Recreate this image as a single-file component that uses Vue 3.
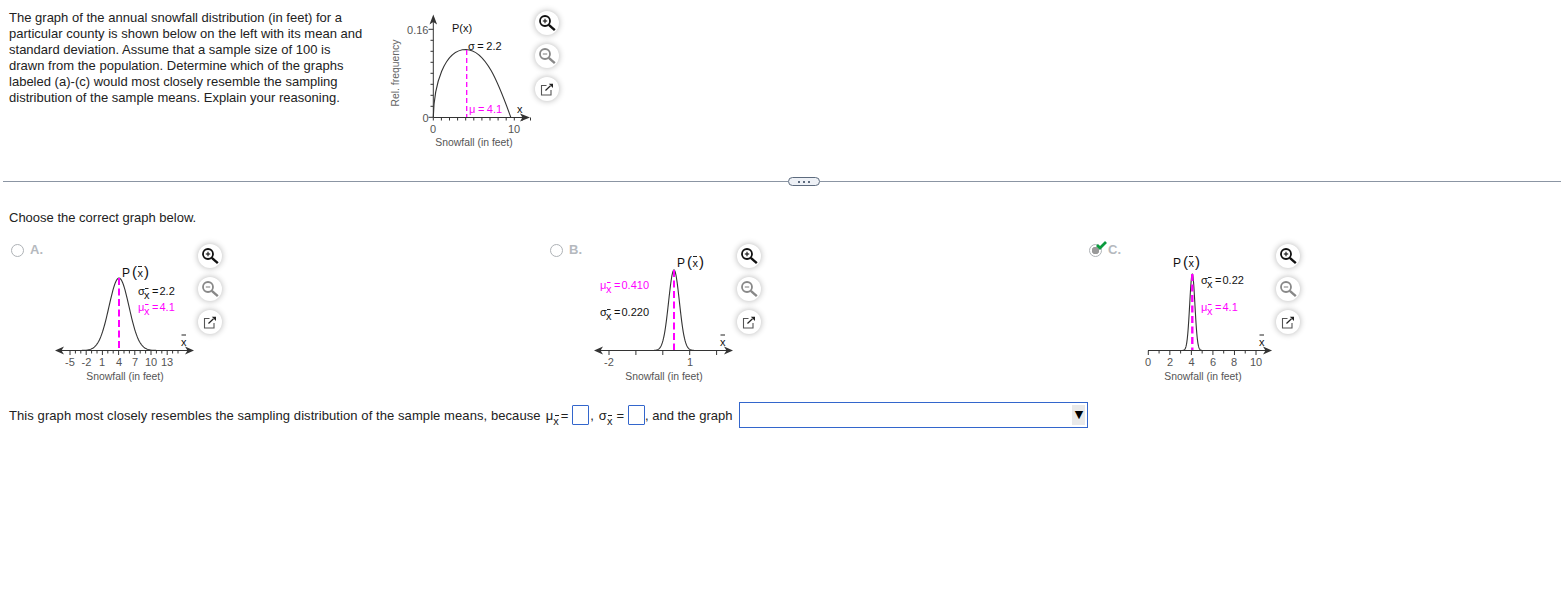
<script setup>
// axis and stat data for the three answer graphs, coords are local to each svg
const range = (a, b) => Array.from({ length: b - a + 1 }, (_, i) => a + i)

function bell(mean, sigma, top, base) {
  const pts = []
  for (let i = -60; i <= 60; i++) {
    const dx = (i / 60) * sigma * 4.5
    const y = base - (base - top) * Math.exp(-(dx * dx) / (2 * sigma * sigma))
    pts.push(`${(mean + dx).toFixed(2)} ${y.toFixed(2)}`)
  }
  return 'M' + pts.join('L')
}

const options = [
  {
    key: 'A',
    mean: 80, sigma: 10, top: 38, dash: '7 3.5', meanW: 2,
    leftArrow: true,
    ticks: range(-5, 15).map((u) => ({ x: 31 + (u + 5) * 5.4, major: (u + 5) % 3 === 0 })),
    labels: [['-5', 31], ['-2', 47.5], ['1', 63], ['4', 80], ['7', 96], ['10', 112], ['13', 128]],
    p: { x: 83, y: 37 },
    stats: [
      { sym: '\u03c3', val: '2.2', x: 99, y: 55, pink: false },
      { sym: '\u03bc', val: '4.1', x: 99, y: 71, pink: true }
    ]
  },
  {
    key: 'B',
    mean: 96, sigma: 5.4, top: 30, dash: '7 3.5', meanW: 2,
    leftArrow: true,
    ticks: range(0, 4).map((u) => ({ x: 31 + u * 26.9, major: true })),
    labels: [['-2', 31], ['1', 112]],
    p: { x: 99, y: 27 },
    stats: [
      { sym: '\u03bc', val: '0.410', x: 22, y: 49, pink: true },
      { sym: '\u03c3', val: '0.220', x: 22, y: 76, pink: false }
    ]
  },
  {
    key: 'C',
    mean: 75.3, sigma: 2.6, top: 34, dash: '7 3.5', meanW: 2.4,
    leftArrow: false,
    selected: true,
    ticks: range(0, 10).map((u) => ({ x: 31.3 + u * 10.77, major: u % 2 === 0 })),
    labels: [['0', 31], ['2', 53], ['4', 74.5], ['6', 96], ['8', 117], ['10', 139]],
    p: { x: 56, y: 27 },
    stats: [
      { sym: '\u03c3', val: '0.22', x: 84, y: 44, pink: false },
      { sym: '\u03bc', val: '4.1', x: 84, y: 71, pink: true }
    ]
  }
]

const curvePath = (o) => bell(o.mean, o.sigma, o.top, 110.5)

const topTicksX = range(0, 12).map((i) => 53.3 + i * 8.1)
const topTicksY = range(0, 8).map((i) => 29.3 + i * 11)
const tools = ['in', 'out', 'open']
</script>

<template>
  <div class="page">
    <section class="intro">
      <p class="question">
        The graph of the annual snowfall distribution (in feet) for a particular county is shown below on the left with its mean and standard deviation. Assume that a sample size of 100 is drawn from the population. Determine which of the graphs labeled (a)-(c) would most closely resemble the sampling distribution of the sample means. Explain your reasoning.
      </p>
      <svg class="source-graph" width="155" height="160" viewBox="0 0 155 160">
        <path class="curve" d="M53.3 117C54 85 64 49.5 86 49.5C107 50 120 88 130.7 117" />
        <line class="mean" x1="86.7" y1="50" x2="86.7" y2="117" stroke-dasharray="5 3" stroke-width="1.3" />
        <line class="axis" x1="53.3" y1="117.5" x2="146" y2="117.5" />
        <line class="axis" x1="53.3" y1="117.5" x2="53.3" y2="20" />
        <path class="head" d="M150 117.5l-10-4 2.5 4-2.5 4z" />
        <path class="head" d="M53.3 14.5l-3.8 10 3.8-2.5 3.8 2.5z" />
        <line v-for="x in topTicksX" :key="x" class="axis" :x1="x" y1="117.5" :x2="x" y2="120.5" />
        <line v-for="(y, i) in topTicksY" :key="y" class="axis" x1="53.3" :y1="y" :x2="i === 0 || i === 8 ? 48.5 : 50.5" :y2="y" />
        <text class="tick" x="48.5" y="33.5" text-anchor="end">0.16</text>
        <text class="tick" x="48.5" y="121.5" text-anchor="end">0</text>
        <text class="tick" x="53" y="133" text-anchor="middle">0</text>
        <text class="tick vert" transform="translate(19 73) rotate(-90)" text-anchor="middle">Rel. frequency</text>
        <text class="tick" x="134" y="133" text-anchor="middle">10</text>
        <text class="note" x="72" y="32">P(x)</text>
        <text class="note tight" x="88" y="50">σ = 2.2</text>
        <text class="note pink tight" x="89" y="113">μ = 4.1</text>
        <text class="note" x="137" y="113">x</text>
        <text class="caption" x="94" y="146" text-anchor="middle">Snowfall (in feet)</text>
      </svg>
      <div class="tools">
        <button v-for="t in tools" :key="t" class="tool" type="button">
          <svg v-if="t !== 'open'" width="20" height="20" viewBox="0 0 20 20" :class="{ muted: t === 'out' }">
            <circle cx="8" cy="8" r="5" fill="none" stroke="currentColor" stroke-width="1.8" />
            <line x1="5.8" y1="8" x2="10.2" y2="8" stroke="currentColor" stroke-width="1.1" />
            <line v-if="t === 'in'" x1="8" y1="5.8" x2="8" y2="10.2" stroke="currentColor" stroke-width="1.1" />
            <line x1="11.8" y1="11.8" x2="17.8" y2="17.2" stroke="currentColor" stroke-width="2.4" />
          </svg>
          <svg v-else width="20" height="20" viewBox="0 0 20 20">
            <path d="M9.5 6.5H4.5v9.5h9.5V11" fill="none" stroke="#555" stroke-width="1.1" />
            <line x1="8.5" y1="11.5" x2="13.5" y2="6.8" stroke="#222" stroke-width="1.2" />
            <path d="M11.8 4.7h4.2v4.2z" fill="#222" />
          </svg>
        </button>
      </div>
    </section>

    <div class="divider">
      <span class="rule left"></span>
      <span class="grip"><i></i><i></i><i></i></span>
      <span class="rule"></span>
    </div>

    <p class="prompt">Choose the correct graph below.</p>

    <section class="options">
      <div v-for="o in options" :key="o.key" class="option">
        <label class="choice">
          <span class="radio" :class="{ on: o.selected }"></span>
          <svg v-if="o.selected" class="check" width="11" height="9" viewBox="0 0 11 9">
            <path d="M1 4l3 3 6-6" fill="none" stroke="#0a9a3c" stroke-width="2.8" />
          </svg>
          <b>{{ o.key }}.</b>
        </label>
        <svg class="graph" width="159" height="150" viewBox="0 0 159 150">
          <path class="curve" :d="curvePath(o)" />
          <line class="mean" :x1="o.mean" :y1="o.top" :x2="o.mean" y2="110.5" :stroke-dasharray="o.dash" :stroke-width="o.meanW" />
          <line class="axis" :x1="o.leftArrow ? 18 : 31" y1="110.5" x2="152" y2="110.5" />
          <path v-if="o.leftArrow" class="head" d="M16 110.5l9-4-2.5 4 2.5 4z" />
          <path class="head" d="M155 110.5l-9-4 2.5 4-2.5 4z" />
          <line v-for="t in o.ticks" :key="t.x" class="axis" :x1="t.x" y1="110.5" :x2="t.x" :y2="t.major ? 115 : 113.5" />
          <text v-for="l in o.labels" :key="l[0]" class="tick" :x="l[1]" y="126" text-anchor="middle">{{ l[0] }}</text>

          <text class="note big" :x="o.p.x" :y="o.p.y">P</text>
          <text class="paren" :x="o.p.x + 10" :y="o.p.y">(</text>
          <text class="note" :x="o.p.x + 15.5" :y="o.p.y">x</text>
          <line class="bar" :x1="o.p.x + 16" :y1="o.p.y - 10.5" :x2="o.p.x + 20" :y2="o.p.y - 10.5" />
          <text class="paren" :x="o.p.x + 22" :y="o.p.y">)</text>

          <g v-for="s in o.stats" :key="s.sym" :class="{ pink: s.pink }">
            <text class="note" :x="s.x" :y="s.y">{{ s.sym }}</text>
            <text class="note" :x="s.x + 6" :y="s.y + 3.5">x</text>
            <line class="bar" :x1="s.x + 7" :y1="s.y - 6.5" :x2="s.x + 10.5" :y2="s.y - 6.5" />
            <text class="note" :x="s.x + 14" :y="s.y">=</text>
            <text class="note" :x="s.x + 21.5" :y="s.y">{{ s.val }}</text>
          </g>

          <text class="note" x="142" y="106">x</text>
          <line class="bar" x1="142.5" y1="95" x2="147" y2="95" />
          <text class="caption" x="86" y="139.5" text-anchor="middle">Snowfall (in feet)</text>
        </svg>
        <div class="tools">
          <button v-for="t in tools" :key="t" class="tool" type="button">
            <svg v-if="t !== 'open'" width="20" height="20" viewBox="0 0 20 20" :class="{ muted: t === 'out' }">
              <circle cx="8" cy="8" r="5" fill="none" stroke="currentColor" stroke-width="1.8" />
              <line x1="5.8" y1="8" x2="10.2" y2="8" stroke="currentColor" stroke-width="1.1" />
              <line v-if="t === 'in'" x1="8" y1="5.8" x2="8" y2="10.2" stroke="currentColor" stroke-width="1.1" />
              <line x1="11.8" y1="11.8" x2="17.8" y2="17.2" stroke="currentColor" stroke-width="2.4" />
            </svg>
            <svg v-else width="20" height="20" viewBox="0 0 20 20">
              <path d="M9.5 6.5H4.5v9.5h9.5V11" fill="none" stroke="#555" stroke-width="1.1" />
              <line x1="8.5" y1="11.5" x2="13.5" y2="6.8" stroke="#222" stroke-width="1.2" />
              <path d="M11.8 4.7h4.2v4.2z" fill="#222" />
            </svg>
          </button>
        </div>
      </div>
    </section>

    <div class="answer">
      <span class="txt sentence">This graph most closely resembles the sampling distribution of the sample means, because</span>
      <span class="txt sym mu">μ<sub>x</sub></span>
      <span class="txt">=</span>
      <span class="box"></span>
      <span class="txt comma first">,</span>
      <span class="txt sym">σ<sub>x</sub></span>
      <span class="txt">=</span>
      <span class="box"></span>
      <span class="txt comma">, and the graph</span>
      <span class="select"><span class="caret">▼</span></span>
    </div>
  </div>
</template>

<style scoped>
.page {
  width: 1561px;
  height: 613px;
  overflow: hidden;
  background: #fff;
  color: #222;
  font-family: "Liberation Sans", Arial, sans-serif;
  font-size: 13px;
  line-height: 16px;
}

.intro {
  display: flex;
  height: 181px;
  padding-left: 9px;
}

.question {
  width: 357px;
  margin: 10px 14px 0 0;
  letter-spacing: 0.01px;
}

.source-graph {
  display: block;
}

.tools {
  display: flex;
  flex-direction: column;
  gap: 9px;
  padding-top: 11px;
}

.options .tools {
  padding-top: 4px;
}

.tool {
  display: flex;
  align-items: center;
  justify-content: center;
  width: 24px;
  height: 24px;
  padding: 0;
  border: 0;
  border-radius: 50%;
  background: #fff;
  color: #111;
  box-shadow: 0 0 6px rgba(0, 0, 0, 0.3);
}

.tool .muted {
  color: #888;
}

.divider {
  display: flex;
  align-items: center;
  height: 1px;
  padding-left: 3px;
}

.rule {
  flex: 1;
  height: 1px;
  background: #8b95a3;
}

.rule.left {
  flex: none;
  width: 785px;
}

.grip {
  display: flex;
  align-items: center;
  justify-content: center;
  gap: 3px;
  box-sizing: border-box;
  width: 32px;
  height: 9px;
  border: 1px solid #5d6b7e;
  border-radius: 5px;
  background: #eef1f6;
}

.grip i {
  width: 2px;
  height: 2px;
  background: #5d6b7e;
}

.prompt {
  margin: 28px 0 14px 9px;
}

.options {
  display: grid;
  grid-template-columns: 539px 539px 475px;
  height: 162px;
  padding-left: 9px;
}

.option {
  display: flex;
  align-items: flex-start;
}

.choice {
  position: relative;
  display: flex;
  flex: none;
  align-items: center;
  gap: 6px;
  width: 30px;
  height: 20px;
  padding-left: 2px;
  box-sizing: border-box;
  color: #b5b9be;
  white-space: nowrap;
}

.radio {
  flex: none;
  box-sizing: border-box;
  width: 13px;
  height: 13px;
  border: 1px solid #aeb2b6;
  border-radius: 50%;
  background: #fff;
}

.radio.on {
  background: radial-gradient(circle, #9a9a9a 0 3.5px, #fff 4px);
}

.check {
  position: absolute;
  top: 1px;
  left: 9px;
}

.graph {
  display: block;
  flex: none;
}

.curve {
  fill: none;
  stroke: #333;
  stroke-width: 1.1;
}

.mean {
  stroke: #f0f;
}

.axis {
  stroke: #333;
  stroke-width: 1;
}

.head {
  fill: #333;
}

.bar {
  stroke: #222;
  stroke-width: 1;
}

.pink .bar {
  stroke: #f0f;
}

text {
  font-family: "Liberation Sans", Arial, sans-serif;
}

.tick {
  font-size: 11px;
  fill: #555;
}

.tick.vert {
  font-size: 10.4px;
  fill: #666;
}

.note {
  font-size: 11px;
  fill: #111;
}

.note.big {
  font-size: 12px;
}

.note.tight {
  word-spacing: -0.5px;
}

.paren {
  font-size: 15px;
  fill: #111;
}

.pink .note,
.note.pink {
  fill: #f0f;
}

.caption {
  font-size: 10.4px;
  fill: #555;
}

.answer {
  display: flex;
  align-items: center;
  gap: 5px;
  height: 26px;
  padding-left: 9px;
  white-space: nowrap;
}

.txt {
  padding-top: 2px;
}

.sentence {
  letter-spacing: 0.08px;
}

.sym {
  position: relative;
  margin-right: -1px;
}

.sym.mu {
  margin-right: -3px;
}

.sym sub {
  position: relative;
  top: 5px;
  font-size: 11px;
  line-height: 0;
  vertical-align: baseline;
  text-decoration: none;
}

.sym::after {
  content: "";
  position: absolute;
  top: 9px;
  right: 0;
  width: 4px;
  height: 1px;
  background: #222;
}

.box {
  box-sizing: border-box;
  width: 17px;
  height: 20px;
  margin-left: -1px;
  border: 1.5px solid #3366cc;
  border-radius: 1px;
  background: #fff;
}

.comma {
  margin-left: -5px;
}

.comma.first {
  margin-left: -4px;
}

.select {
  display: flex;
  justify-content: flex-end;
  box-sizing: border-box;
  width: 349px;
  height: 26px;
  margin-left: 2px;
  padding: 2px;
  border: 1px solid #3366cc;
}

.caret {
  display: flex;
  align-items: center;
  justify-content: center;
  width: 13px;
  background: #e9e9e9;
  color: #000;
  font-family: "DejaVu Sans", sans-serif;
  font-size: 11px;
}
</style>
